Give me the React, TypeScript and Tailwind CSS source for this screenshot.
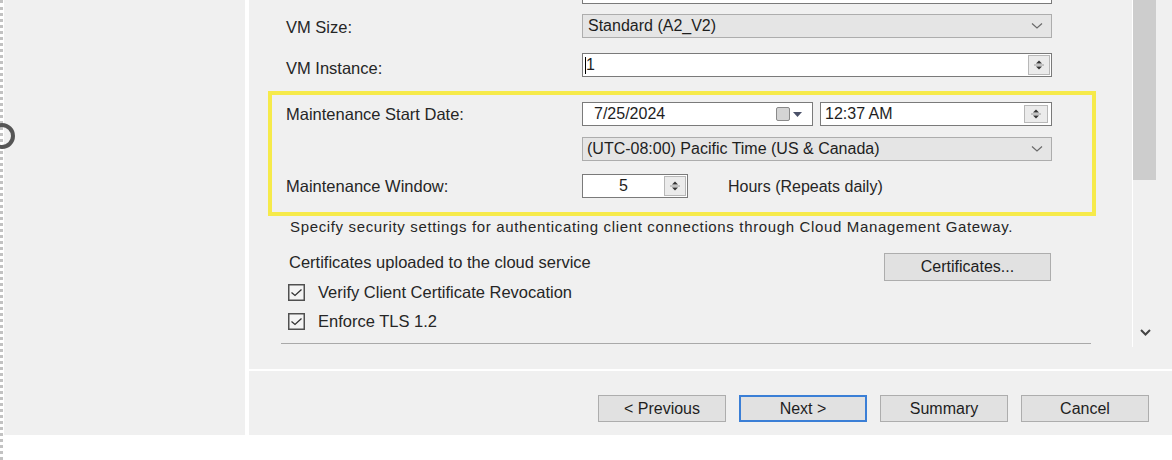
import React from "react";

function Chevron() {
  return (
    <svg width="12" height="8" viewBox="0 0 12 8" className="shrink-0">
      <path d="M1 1.5 L6 6 L11 1.5" fill="none" stroke="#6a6a6a" strokeWidth="1.2" />
    </svg>
  );
}

function Spinner({ w = 22, h = 20 }: { w?: number; h?: number }) {
  return (
    <div className="shrink-0 border border-[#b8b8b8] bg-[#ebebeb] flex items-center justify-center" style={{ width: w, height: h }}>
      <svg width="12" height="14" viewBox="0 0 12 14">
        <path d="M3 5.5 L6 2.5 L9 5.5 Z" fill="#333" />
        <line x1="1" y1="7" x2="11" y2="7" stroke="#9a9a9a" strokeWidth="1" />
        <path d="M3 8.5 L6 11.5 L9 8.5 Z" fill="#333" />
      </svg>
    </div>
  );
}

function Check() {
  return (
    <svg width="17" height="17" viewBox="0 0 17 17" className="shrink-0">
      <rect x="0.75" y="0.75" width="15.5" height="15.5" fill="#f4f4f4" stroke="#505050" strokeWidth="1.5" />
      <path d="M3.5 8.5 L7 11.5 L13.5 5.5" fill="none" stroke="#333" strokeWidth="1.3" />
    </svg>
  );
}

function Btn({ label, primary }: { label: string; primary?: boolean }) {
  return (
    <div
      className={
        "h-[27px] w-[128px] bg-[#e1e1e1] flex items-center justify-center text-[16px] text-[#1e1e1e] " +
        (primary ? "border-2 border-[#3b7fd6]" : "border border-[#adadad]")
      }
    >
      {label}
    </div>
  );
}

export default function App() {
  return (
    <div className="w-[1172px] h-[460px] bg-white relative flex overflow-hidden font-['Liberation_Sans',Arial,sans-serif] text-[#262626]">
      {/* dotted edge */}
      <div className="w-[4px] h-[460px] border-l-[3px] border-dotted border-[#c2c2c2]" />
      {/* left panel */}
      <div className="w-[241px] h-[435px] bg-[#f0f0f0]" />
      <div className="w-[4px]" />
      {/* right panel */}
      <div className="flex-1 h-[435px] bg-[#f0f0f0] flex flex-col">
        <div className="h-[369px] flex overflow-hidden">
          <div className="w-[883px] flex flex-col">
            {/* partially visible top textbox */}
            <div className="mt-[-20px] ml-[333px] w-[470px] h-[24px] border border-[#7a7a7a] bg-white" />

            {/* VM Size */}
            <div className="mt-[10px] h-[24px] flex items-center pl-[37px]">
              <div className="w-[296px] text-[16.5px] pt-[2px]">VM Size:</div>
              <div className="w-[470px] h-[24px] border border-[#adadad] bg-[#e5e5e5] flex items-center justify-between pl-[5px] pr-[8px] text-[16px] text-[#1e1e1e]">
                <span>Standard (A2_V2)</span>
                <Chevron />
              </div>
            </div>

            {/* VM Instance */}
            <div className="mt-[15px] h-[24px] flex items-center pl-[37px]">
              <div className="w-[296px] text-[16.5px] pt-[7px]">VM Instance:</div>
              <div className="w-[470px] h-[24px] border border-[#7a7a7a] bg-white flex items-center justify-between pl-[2px] pr-[1px] text-[16px] text-[#1e1e1e]">
                <span className="flex items-center">
                  <span className="w-[1px] h-[17px] bg-black" />
                  <span>1</span>
                </span>
                <Spinner />
              </div>
            </div>

            {/* highlighted maintenance box */}
            <div className="mt-[14px] ml-[19px] w-[828px] border-[4px] border-[#f6ea4a] pl-[14px] pt-[7px] pb-[14px] flex flex-col">
              <div className="h-[24px] flex items-center">
                <div className="w-[296px] text-[16.5px]">Maintenance Start Date:</div>
                <div className="w-[231px] h-[24px] border border-[#7a7a7a] bg-white flex items-center justify-between pl-[11px] pr-[10px] text-[16px] text-[#1e1e1e]">
                  <span>7/25/2024</span>
                  <span className="flex items-center gap-[3px]">
                    <span className="w-[14px] h-[14px] rounded-[2px] border border-[#8a8a8a] bg-[#d4d4d4]" />
                    <svg width="9" height="5" viewBox="0 0 9 5">
                      <path d="M0 0 L9 0 L4.5 5 Z" fill="#4a5068" />
                    </svg>
                  </span>
                </div>
                <div className="ml-[7px] w-[232px] h-[24px] border border-[#7a7a7a] bg-white flex items-center justify-between pl-[4px] pr-[3px] text-[16px] text-[#1e1e1e]">
                  <span>12:37 AM</span>
                  <Spinner w={24} h={18} />
                </div>
              </div>

              <div className="mt-[11px] h-[24px] flex items-center">
                <div className="w-[296px]" />
                <div className="w-[470px] h-[24px] border border-[#adadad] bg-[#e5e5e5] flex items-center justify-between pl-[4px] pr-[8px] text-[16px] text-[#1e1e1e]">
                  <span>(UTC-08:00) Pacific Time (US &amp; Canada)</span>
                  <Chevron />
                </div>
              </div>

              <div className="mt-[13px] h-[24px] flex items-center">
                <div className="w-[296px] text-[16.5px]">Maintenance Window:</div>
                <div className="w-[106px] h-[24px] border border-[#7a7a7a] bg-white flex items-center justify-between pr-[1px] text-[16px] text-[#1e1e1e]">
                  <span className="flex-1 text-center">5</span>
                  <Spinner w={22} h={20} />
                </div>
                <div className="ml-[40px] text-[16px] pt-[1px]">Hours (Repeats daily)</div>
              </div>
            </div>

            {/* security */}
            <div className="mt-[2px] h-[18px] leading-[18px] pl-[41px] text-[15px] tracking-[0.65px] whitespace-nowrap">
              Specify security settings for authenticating client connections through Cloud Management Gateway.
            </div>

            <div className="mt-[17px] h-[28px] flex items-start pl-[40px]">
              <div className="w-[595px] leading-[18px] text-[16.5px]">Certificates uploaded to the cloud service</div>
              <div className="w-[167px] h-[28px] border border-[#adadad] bg-[#e1e1e1] flex items-center justify-center text-[16px] text-[#1e1e1e]">
                Certificates...
              </div>
            </div>

            <div className="mt-[3px] h-[17px] flex items-center pl-[39px] gap-[13px]">
              <Check />
              <span className="text-[16.5px]">Verify Client Certificate Revocation</span>
            </div>
            <div className="mt-[12px] h-[17px] flex items-center pl-[39px] gap-[13px]">
              <Check />
              <span className="text-[16.5px]">Enforce TLS 1.2</span>
            </div>

            <div className="mt-[13px] ml-[32px] w-[810px] h-[1px] bg-[#a9a9a9]" />
          </div>

          {/* scrollbar */}
          <div className="w-[24px] h-[347px] border-l border-white flex flex-col">
            <div className="w-[23px] h-[180px] bg-[#cdcdcd]" />
            <div className="flex-1" />
            <div className="h-[18px] flex items-start justify-center pl-[1px]">
              <svg width="11" height="7" viewBox="0 0 11 7">
                <path d="M1 1 L5.5 5.5 L10 1" fill="none" stroke="#444" strokeWidth="2" />
              </svg>
            </div>
          </div>
          <div className="flex-1" />
        </div>

        <div className="h-[2px] bg-white" />

        <div className="flex-1 flex justify-end items-start pt-[24px] pr-[23px] gap-[13px]">
          <Btn label="< Previous" />
          <Btn label="Next >" primary />
          <Btn label="Summary" />
          <Btn label="Cancel" />
        </div>
      </div>

      {/* ring cut off at left edge */}
      <div className="absolute left-[-11px] top-[123px] w-[26px] h-[26px] rounded-full border-[4px] border-[#555]" />
    </div>
  );
}
